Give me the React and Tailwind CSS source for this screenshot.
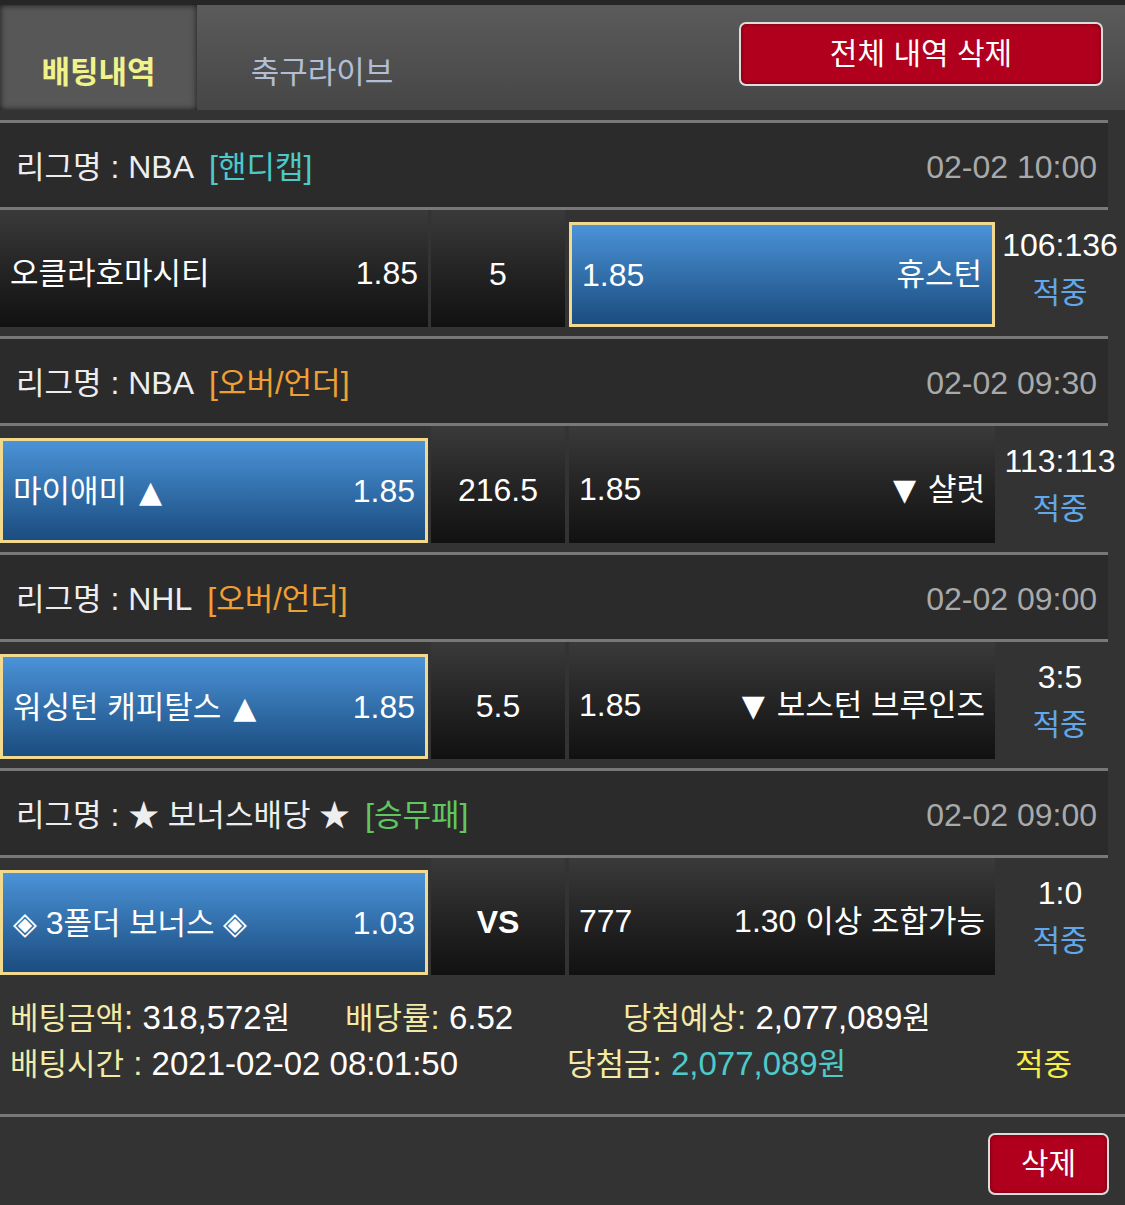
import React from "react";

const K = ({ children, className = "" }) => (
  <span className={"text-[31px] " + className}>{children}</span>
);

const T = ({ children, className = "" }) => (
  <span className={"font-['DejaVu_Sans',sans-serif] text-[30px] " + className}>{children}</span>
);

const rows = [
  {
    league: "NBA",
    tag: "핸디캡",
    tagClass: "text-[#4cc9c9]",
    date: "02-02 10:00",
    left: <K>오클라호마시티</K>,
    leftOdds: "1.85",
    leftSel: false,
    mid: "5",
    right: <K>휴스턴</K>,
    rightOdds: "1.85",
    rightSel: true,
    score: "106:136",
  },
  {
    league: "NBA",
    tag: "오버/언더",
    tagClass: "text-[#f0a033]",
    date: "02-02 09:30",
    left: (
      <span className="whitespace-pre">
        <K>마이애미</K>
        <T className="ml-[12px]">▲</T>
      </span>
    ),
    leftOdds: "1.85",
    leftSel: true,
    mid: "216.5",
    right: (
      <span className="whitespace-pre">
        <T className="mr-[12px]">▼</T>
        <K>샬럿</K>
      </span>
    ),
    rightOdds: "1.85",
    rightSel: false,
    score: "113:113",
  },
  {
    league: "NHL",
    tag: "오버/언더",
    tagClass: "text-[#f0a033]",
    date: "02-02 09:00",
    left: (
      <span className="whitespace-pre">
        <K>워싱턴 캐피탈스</K>
        <T className="ml-[12px]">▲</T>
      </span>
    ),
    leftOdds: "1.85",
    leftSel: true,
    mid: "5.5",
    right: (
      <span className="whitespace-pre">
        <T className="mr-[12px]">▼</T>
        <K>보스턴 브루인즈</K>
      </span>
    ),
    rightOdds: "1.85",
    rightSel: false,
    score: "3:5",
  },
  {
    league: null,
    tag: "승무패",
    tagClass: "text-[#5ec85e]",
    date: "02-02 09:00",
    left: (
      <span className="whitespace-pre">
        <K>◈ </K>3<K>폴더 보너스 ◈</K>
      </span>
    ),
    leftOdds: "1.03",
    leftSel: true,
    mid: "VS",
    right: (
      <span className="whitespace-pre">
        1.30 <K>이상 조합가능</K>
      </span>
    ),
    rightOdds: "777",
    rightSel: false,
    score: "1:0",
  },
];

function Cell({ sel, width, children }) {
  if (sel) {
    return (
      <div className={width + " h-full flex flex-col justify-end"}>
        <div className="h-[105px] border-[3px] border-[#f3d98d] bg-gradient-to-b from-[#4b93d8] to-[#1b4d80] flex items-center justify-between px-[10px] pt-[1px] text-white">
          {children}
        </div>
      </div>
    );
  }
  return (
    <div className={width + " h-full bg-gradient-to-b from-[#3a3a3a] to-[#111111] flex items-center justify-between px-[10px] pt-[10px] text-white"}>
      {children}
    </div>
  );
}

function Row({ r }) {
  return (
    <div>
      <div className="w-[1108px] h-[3px] bg-[#787878]" />
      <div className="w-[1108px] h-[84px] bg-[#2b2b2b] flex items-center justify-between pl-[16px] pr-[11px] pt-[4px]">
        <div className="text-[#eeeeee] whitespace-pre">
          <K>리그명</K>
          {" : "}
          {r.league ? r.league : <K>★ 보너스배당 ★</K>}
          <span className={"ml-[15px] " + r.tagClass}>
            [<K>{r.tag}</K>]
          </span>
        </div>
        <div className="text-[#a9a9a9]">{r.date}</div>
      </div>
      <div className="w-[1108px] h-[3px] bg-[#787878]" />
      <div className="h-[117px] flex">
        <Cell sel={r.leftSel} width="w-[428px]">
          {r.left}
          <span>{r.leftOdds}</span>
        </Cell>
        <div className="w-[3px]" />
        <div className="w-[134px] h-full bg-gradient-to-b from-[#3a3a3a] to-[#111111] flex items-center justify-center pt-[12px] text-white">
          {r.mid === "VS" ? <span className="font-bold">VS</span> : r.mid}
        </div>
        <div className="w-[4px]" />
        <Cell sel={r.rightSel} width="w-[426px]">
          <span>{r.rightOdds}</span>
          {r.right}
        </Cell>
        <div className="flex-1 flex flex-col items-center justify-center">
          <div className="leading-[47px] text-white">{r.score}</div>
          <div className="leading-[47px] text-[#62a8e8] text-[30px]">적중</div>
        </div>
      </div>
      <div className="h-[9px]" />
    </div>
  );
}

export default function App() {
  return (
    <div className="w-[1125px] h-[1205px] overflow-hidden bg-[#333333] font-['Liberation_Sans','Noto_Sans_CJK_KR',sans-serif] text-[32px] leading-[1.2]">
      <div className="h-[5px] bg-[#262626]" />
      <div className="h-[105px] flex bg-gradient-to-b from-[#5b5b5b] to-[#464646]">
        <div className="w-[197px] bg-[#575757] shadow-[inset_0_0_6px_rgba(0,0,0,0.75)] flex items-center justify-center pt-[30px]">
          <span className="text-[31px] font-bold text-[#f0f28c]">배팅내역</span>
        </div>
        <div className="w-[250px] flex items-center justify-center pt-[30px]">
          <span className="text-[31px] text-[#b2bed4]">축구라이브</span>
        </div>
        <div className="flex-1" />
        <div className="mt-[17px] mr-[22px] w-[364px] h-[64px] rounded-[7px] border-2 border-[#dcdcdc] bg-[#b0001d] shadow-[inset_0_0_4px_rgba(0,0,0,0.4)] flex items-center justify-center">
          <span className="text-[30px] text-white">전체 내역 삭제</span>
        </div>
      </div>
      <div className="h-[10px]" />
      {rows.map((r, i) => (
        <Row key={i} r={r} />
      ))}
      <div className="pt-[11px] pb-[27px] pl-[10px] text-white text-[33px]">
        <div className="flex leading-[45px] whitespace-pre">
          <div className="w-[335px]">
            <K className="text-[#f2eaa6]">베팅금액</K>
            <span className="text-[#f2eaa6]">: </span>318,572<K>원</K>
          </div>
          <div className="w-[278px]">
            <K className="text-[#f2eaa6]">배당률</K>
            <span className="text-[#f2eaa6]">: </span>6.52
          </div>
          <div>
            <K className="text-[#f2eaa6]">당첨예상</K>
            <span className="text-[#f2eaa6]">: </span>2,077,089<K>원</K>
          </div>
        </div>
        <div className="flex leading-[45px] whitespace-pre">
          <div className="w-[557px]">
            <K className="text-[#f2eaa6]">배팅시간</K>
            <span className="text-[#f2eaa6]"> : </span>2021-02-02 08:01:50
          </div>
          <div className="w-[448px]">
            <K className="text-[#f2eaa6]">당첨금</K>
            <span className="text-[#f2eaa6]">: </span>
            <span className="text-[#4fcaca]">
              2,077,089<K>원</K>
            </span>
          </div>
          <div>
            <K className="text-[#f5ee48]">적중</K>
          </div>
        </div>
      </div>
      <div className="h-[3px] bg-[#787878]" />
      <div className="flex justify-end pt-[16px] pr-[16px]">
        <div className="w-[121px] h-[62px] rounded-[7px] border-2 border-[#dcdcdc] bg-[#b0001d] shadow-[inset_0_0_4px_rgba(0,0,0,0.4)] flex items-center justify-center">
          <span className="text-[30px] text-white">삭제</span>
        </div>
      </div>
    </div>
  );
}
